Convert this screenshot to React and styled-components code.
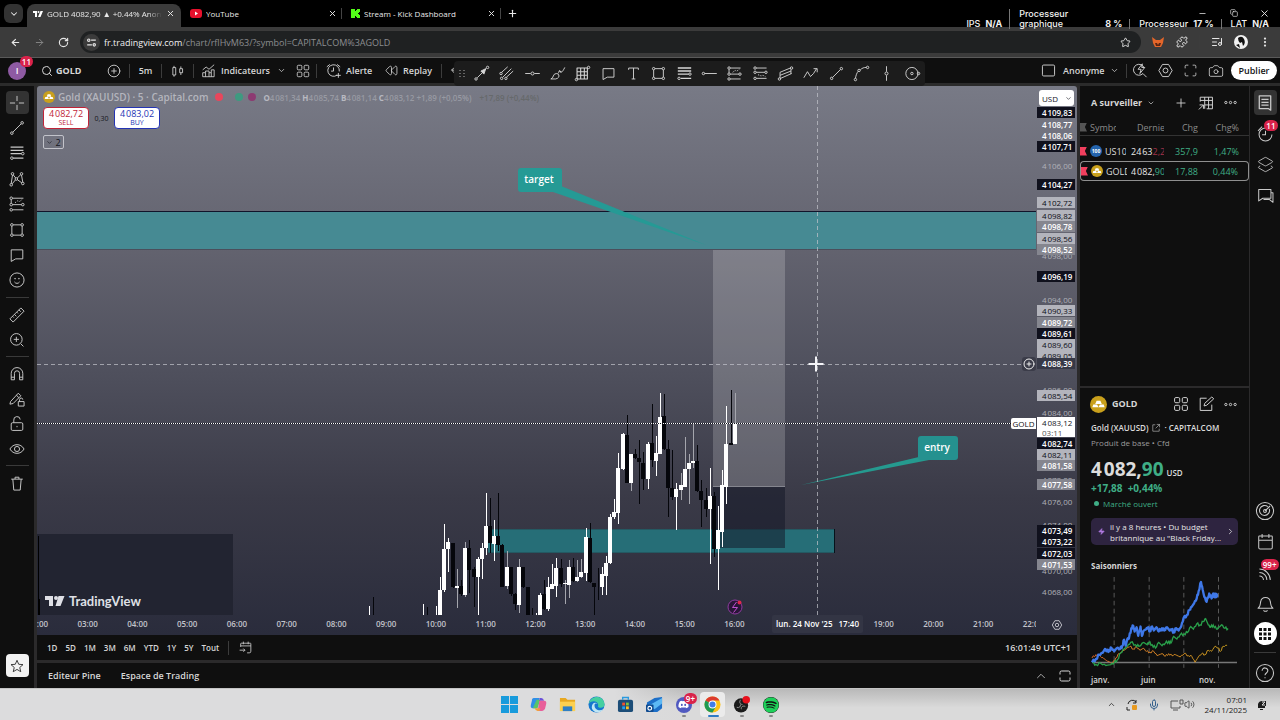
import React from "react";
import styled, { createGlobalStyle, css } from "styled-components";
import {
  ArrowLeft, ArrowRight, RotateCw, Star, Puzzle, ListMusic, EllipsisVertical, ChevronDown, ChevronUp,
  ChevronRight, X, Plus, Minus, Copy, Search, CirclePlus, Camera, Layers2, Mic, Volume2, Zap, Rewind,
} from "lucide-react";
import { FaDiscord, FaSpotify } from "react-icons/fa";

const Global = createGlobalStyle`
  *, *::before, *::after { box-sizing: border-box; }
  html { background: #0f0f0f; }
  body { margin: 0; font-family: "Open Sans", "Noto Sans", sans-serif; font-size: 9px; color: #d6d6d6; }
  button, select { font: inherit; color: inherit; background: none; border: 0; padding: 0; margin: 0; }
  ul { list-style: none; margin: 0; padding: 0; }
  h2, h3, p { margin: 0; font-size: inherit; font-weight: inherit; }
  svg { display: block; flex: none; }
`;

/* ---------- icon set, drawn on a 28 unit grid ---------- */
const dot = (x, y, r = 2) => <circle key={`${x}-${y}`} cx={x} cy={y} r={r} />;
const GLYPHS = {
  cross: <path d="M14 3v8M14 17v8M3 14h8M17 14h8" />,
  trend: <>{dot(6, 22)}{dot(22, 6)}<path d="M7.5 20.5l13-13" /></>,
  fib: <><path d="M4 5h20M4 10h20M4 15h17M8 22h16" strokeWidth="2" />{dot(23, 15)}{dot(6, 22)}</>,
  fibBold: <><path d="M3 5h22M3 10h22M3 15h18M8 22h17" strokeWidth="2.4" />{dot(23, 15)}{dot(5, 22)}</>,
  pattern: <>{dot(7, 6)}{dot(21, 6)}{dot(13, 14)}{dot(5, 23)}{dot(23, 21)}<path d="M7 8L5 21M8 7.500l4 5M14.500 12.500l5-5M21 8l2 11M6.500 21.500l5-6M14.500 15l7 5" /></>,
  position: <>{dot(5, 5)}{dot(5, 15)}{dot(5, 23)}{dot(23, 15)}<path d="M7 5h17M7 15h14M7 23h17M5 7v6" /><path d="M11 12l4-3 3 1 4-3" strokeDasharray="2 2" /></>,
  positionB: <>{dot(5, 5)}{dot(5, 12)}{dot(5, 22)}{dot(23, 12)}<path d="M7 5h17M7 12h14M7 22h17" /><path d="M10 16l5 2 3-1 4 2" strokeDasharray="2 2" /></>,
  rect: <>{dot(6, 6)}{dot(22, 6)}{dot(6, 22)}{dot(22, 22)}<path d="M8 6h12M8 22h12M6 8v12M22 8v12" /></>,
  callout: <path d="M5 6h18v14H12l-7 4z" />,
  smile: <><circle cx="14" cy="14" r="11" /><path d="M10 17c2 3 6 3 8 0" />{dot(11, 12, 0.6)}{dot(17, 12, 0.6)}</>,
  ruler: <path d="M3 20L20 3l5 5L8 25zM7 16l2 2M10 13l3 3M13.500 9.500l2 2M17 6l3 3" />,
  zoom: <><circle cx="13" cy="13" r="9" /><path d="M13 9v8M9 13h8M20 20l4 4" /></>,
  magnet: <path d="M5 23V13a9 9 0 0118 0v10h-5V13a4 4 0 00-8 0v10zM5 19h5M18 19h5" />,
  pencilLock: <><path d="M4 18L16 5l4 4L8 21l-5 1zM13 8l4 4" /><path d="M16 18h9v7h-9zM18 18v-3a2.500 2.500 0 015 0" /></>,
  lock: <><rect x="5" y="12" width="18" height="12" rx="2" /><path d="M9 12V8a5 5 0 0110-1M14 17v2" /></>,
  eye: <><path d="M3 14c5-9 17-9 22 0-5 9-17 9-22 0z" /><circle cx="14" cy="14" r="4" /></>,
  trash: <path d="M5 8h18M11 8V5h6v3M7.500 8l1.500 17h10l1.500-17" />,
  star: <path d="M14 4l3 7 7.500.6-5.700 5 1.800 7.400-6.600-4-6.600 4 1.800-7.400-5.700-5L11 11z" />,
  candles: <path d="M7 5v3M7 21v3M5 8h5v13H5zM19 6v4M19 17v4M17 10h5v7h-5z" />,
  indicators: <path d="M3 12l6-5 5 4 9-8M3 24V17h5v-3h6v3h4v-5h5v12zM8 17v7M14 17v7M18 17v7" />,
  tiles: <><rect x="4" y="4" width="8" height="8" rx="2" /><rect x="16" y="4" width="8" height="8" rx="2" /><rect x="4" y="16" width="8" height="8" rx="2" /><rect x="16" y="16" width="8" height="8" rx="2" /></>,
  alert: <path d="M20 21.500a9.500 9.500 0 113.500-6M14 9v6h-4M3 8l5-4M20 4l5 4M22 18v8M18 22h8" />,
  alarm: <path d="M14 6a9.500 9.500 0 109.500 9.500M14 10v6H9M3 10l6-6" />,
  square: <rect x="4" y="5" width="20" height="18" rx="2" />,
  bolt: <path d="M20 10a9 9 0 10-2 9l6 6M17 3l-7 9h5l-2 7 8-10h-5z" />,
  hex: <><path d="M9 4h10l6 10-6 10H9L3 14z" /><circle cx="14" cy="14" r="4" /></>,
  full: <path d="M4 10V6q0-2 2-2h4M18 4h4q2 0 2 2v4M24 18v4q0 2-2 2h-4M10 24H6q-2 0-2-2v-4" />,
  window: <path d="M4 11V7q0-3 3-3h14q3 0 3 3v4M24 17v4q0 3-3 3H7q-3 0-3-3v-4" />,
  arrowLine: <>{dot(5, 23)}{dot(24, 4)}<path d="M7 21L22 6" /><path d="M21 6l-8 4 5 5z" fill="currentColor" /></>,
  pitch: <>{dot(5, 14)}{dot(13, 22)}{dot(6, 22)}<path d="M6 12L16 3M14 20l11-10M8 20L22 6" /></>,
  hline: <><path d="M2 14h9M17 14h9" />{dot(14, 14, 2.500)}</>,
  brush: <path d="M3 23c5-1 3-9 9-9 6 0 6 8-1 9zM15 14c2-4 3-5 5-2M16 11c1-3 3-2 3 1 3 0 5-4 7-8" />,
  gann: <><path d="M5 5h17v18H5zM11 5v18M17 5v18M5 11h17M5 17h17" strokeWidth="1.8" />{dot(24, 4)}{dot(4, 24)}</>,
  text: <path d="M6 8V5h16v3M14 5v18M11 23h6" />,
  ray: <>{dot(4, 14)}<path d="M6 14h20" /></>,
  channel: <>{dot(24, 5)}{dot(4, 23)}<path d="M5 12L22 5M5 17l18-7M6 22l18-8M5 12v10M23 7v8" /></>,
  wave: <path d="M3 21l6-10 5 8 5-5 5-8M19 6h6v6" />,
  curve: <>{dot(4, 24)}{dot(24, 4)}{dot(10, 9)}<path d="M4 22c1-5 2-9 5-12M12 8c3-3 6-4 10-4" /></>,
  vline: <><path d="M14 2v9M14 17v9" />{dot(14, 14, 2.500)}</>,
  circle: <><circle cx="13" cy="14" r="10" />{dot(13, 14)}{dot(24, 14)}</>,
  list: <path d="M6 4h16v20l-3-2H6zM9 9h10M9 13h10M9 17h10" strokeWidth="1.800" />,
  chat: <path d="M4 5h18v13H10l-6 4zM22 10h3v14l-5-4H11" />,
  target: <><circle cx="14" cy="14" r="12" /><path d="M18 8a7 7 0 102 3M14 14l7-7" />{dot(14, 14, 2)}</>,
  calendar: <path d="M4 7q0-1 1-1h18q1 0 1 1v16q0 2-2 2H6q-2 0-2-2zM4 12h20M9 3v6M19 3v6" />,
  goto: <path d="M5 13V7q0-1 1-1h17q1 0 1 1v14q0 3-3 3h-4M5 11h19M10 3v5M19 3v5M3 19h10M10 16l3 3-3 3" />,
  feed: <path d="M5 9a16 16 0 0116 16M5 14a11 11 0 0111 11M5 19a6 6 0 016 6" />,
  bell: <path d="M3 21c4-2 3-7 4-10 1-8 13-8 14 0 1 3 0 8 4 10zM11 24q3 3 6 0" />,
  help: <><circle cx="14" cy="14" r="12" /><path d="M10 11c0-6 8-5 8 0 0 3-4 3-4 6M14 20v1.500" /></>,
  table: <path d="M5 12V5h19v18h-9M5 10h19M12 5v18M18 5v18M12 17h12M3 24l7-7M4 17h6v6" />,
  more: <>{dot(4, 14, 2.500)}{dot(14, 14, 2.500)}{dot(24, 14, 2.500)}</>,
  edit: <path d="M15 5H5v19h18v-9M11 17l1-4L23 3l3 3-11 10z" />,
  out: <path d="M12 5H5v18h18v-7M16 4h8v8M24 4L13 15" />,
  undo: <path d="M12 6l-6 6 6 6M6 12h14" />,
  tune: <>{dot(7, 8, 3)}{dot(21, 20, 3)}<path d="M13 8h12M3 20h12" /></>,
};
const Glyph = ({ name, size = 18, weight = 1.5 }) => (
  <svg width={size} height={size} viewBox="0 0 28 28" fill="none" stroke="currentColor" strokeWidth={weight} strokeLinejoin="round" aria-hidden="true">
    {GLYPHS[name]}
  </svg>
);

const Coin = ({ size }) => (
  <svg width={size} height={size} viewBox="0 0 18 18" aria-hidden="true">
    <circle cx="9" cy="9" r="9" fill="#c9a01c" />
    <path d="M7 5h4l1.500 3.500h-7zM3.500 9h4L9 12H2.500zM10.500 9h4l1 3H9z" fill="#fff" />
  </svg>
);

/* ---------- page frame ---------- */
const Page = styled.div`
  min-height: 100vh;
  display: flex;
  flex-direction: column;
  position: relative;
`;

/* ---------- browser chrome ---------- */
const TabStrip = styled.header`
  height: 27px;
  background: #000;
  display: flex;
  align-items: stretch;
  padding: 4px 0 0 4px;
  color: #e8e8e8;
  font-size: 8px;
  font-weight: 500;
`;
const RoundButton = styled.button`
  width: 19px;
  height: 19px;
  margin-right: 4px;
  border-radius: 6px;
  background: #333;
  display: grid;
  place-items: center;
`;
const Tab = styled.div`
  flex: 0 1 ${(p) => p.$w}px;
  min-width: 0;
  display: flex;
  align-items: center;
  gap: 4px;
  padding: 0 6px 4px 6px;
  ${(p) => p.$active
    ? css`background: #3b3b3b; border-radius: 8px 8px 0 0;`
    : css`padding: 0 8px 4px 9px; &::after { content: ""; width: 1px; height: 11px; background: #444; margin-right: -8px; }`}
`;
const TabTitle = styled.span`
  flex: 1;
  min-width: 0;
  overflow: hidden;
  white-space: nowrap;
  ${(p) => p.$fade && css`mask-image: linear-gradient(90deg, #000 88%, transparent);`}
`;
const PlainButton = styled.button`
  display: grid;
  place-items: center;
  width: ${(p) => p.$w || 16}px;
  height: ${(p) => p.$h || 18}px;
  color: ${(p) => p.$color || "inherit"};
`;
const WindowButtons = styled.div`
  margin-left: auto;
  display: flex;
  width: 93px;
  justify-content: space-around;
`;
const AddressRow = styled.div`
  height: 31px;
  background: #3b3b3b;
  border-bottom: 1px solid #5a5a5a;
  display: flex;
  align-items: center;
  padding: 0 3px;
  color: #e6e6e6;
`;
const AddressField = styled.div`
  flex: 1;
  height: 22px;
  margin: 0 5px;
  border-radius: 11px;
  background: #1f2122;
  display: flex;
  align-items: center;
  padding: 0 8px 0 3px;
  gap: 4px;
`;
const SiteInfo = styled.button`
  width: 17px;
  height: 17px;
  border-radius: 50%;
  background: #3b3b3b;
  display: grid;
  place-items: center;
`;
const Url = styled.span`
  flex: 1;
  color: #8c8e90;
  font-size: 9px;
  b { color: #f0f0f0; font-weight: 500; }
`;
const ToolSet = styled.div`
  display: flex;
  align-items: center;
`;
const Stats = styled.dl`
  position: absolute;
  right: 11px;
  top: 9px;
  margin: 0;
  display: flex;
  align-items: flex-end;
  font: 9px/10px Inter, sans-serif;
  color: #f2f2f2;
  pointer-events: none;
`;
const Stat = styled.div`
  display: flex;
  align-items: flex-end;
  justify-content: space-between;
  gap: 5px;
  padding: 0 7px 0 9px;
  width: ${(p) => (p.$wide ? "120px" : "auto")};
  & + & { border-left: 1px solid #777; }
  &:last-child { padding-right: 0; }
  dt { font-weight: 500; }
  dd { margin: 0; font-weight: 700; white-space: nowrap; }
`;

/* ---------- application header ---------- */
const AppHeader = styled.div`
  position: relative;
  height: 28px;
  background: #0f0f0f;
  border-bottom: 3px solid #2b2b2b;
  display: flex;
  align-items: center;
  padding-right: 3px;
  font-weight: 600;
`;
const Tool = styled.button`
  width: ${(p) => p.$w}px;
  height: 24px;
  display: flex;
  align-items: center;
  justify-content: ${(p) => (p.$pad ? "flex-start" : "center")};
  padding-left: ${(p) => p.$pad || 0}px;
  gap: ${(p) => p.$gap || 4}px;
  white-space: nowrap;
  font-weight: ${(p) => (p.$bold ? 700 : 600)};
`;
const Divider = styled.span`
  width: 1px;
  height: 14px;
  margin: 0 ${(p) => p.$m || 1}px;
  background: #3c3c3c;
`;
const Profile = styled.button`
  position: relative;
  width: 18px;
  height: 18px;
  margin: 0 11px 0 8px;
  border-radius: 50%;
  background: #8e5aa3;
  color: #fff;
  font-size: 9px;
`;
const Badge = styled.span`
  position: absolute;
  top: ${(p) => p.$top || -6}px;
  right: ${(p) => p.$right || -7}px;
  min-width: 12px;
  height: 11px;
  padding: 0 2px;
  border-radius: 6px;
  background: #d9234a;
  color: #fff;
  font-size: 8px;
  line-height: 11px;
  font-weight: 600;
  text-align: center;
`;
const FloatingTools = styled.div`
  position: absolute;
  left: 454px;
  top: 3px;
  width: 471px;
  height: 25px;
  border-radius: 4px;
  background: #1c1c1c;
  display: flex;
  align-items: center;
  z-index: 2;
  button { flex: 1; height: 24px; display: grid; place-items: center; }
`;
const Grip = styled.span`
  width: 7px;
  height: 9px;
  margin: 0 4px;
  background: radial-gradient(circle, #666 1px, transparent 1px) 0 0 / 4px 3px;
`;
const Publish = styled.button`
  height: 19px;
  width: 46px;
  margin-left: 3px;
  border-radius: 10px;
  background: #fff;
  color: #151515;
  font-weight: 600;
`;
const RightTools = styled(ToolSet)`
  margin-left: auto;
`;

/* ---------- workspace ---------- */
const Workspace = styled.main`
  flex: 1;
  display: flex;
  background: #2b2a2b;
  gap: 3px;
`;
const LeftRail = styled.nav`
  width: 34px;
  background: #0f0f0f;
  display: flex;
  flex-direction: column;
  align-items: center;
  padding: 5px 0 11px;
  color: #c9c9c9;
`;
const RailGroup = styled.div`
  display: flex;
  flex-direction: column;
  gap: 2px;
  & + & {
    margin-top: 5px;
    padding-top: 5px;
    border-top: 1px solid #3a3a3a;
  }
  &:first-child {
    height: 201px;
    gap: 0;
    justify-content: space-between;
  }
`;
const RailButton = styled.button`
  position: relative;
  width: 23px;
  height: ${(p) => p.$h || 23}px;
  border-radius: 4px;
  display: grid;
  place-items: center;
  background: ${(p) => (p.$on ? "#333" : "none")};
`;
const Favourite = styled(RailButton)`
  margin-top: auto;
  background: #f2f2f2;
  color: #222;
`;
const Center = styled.section`
  flex: 1;
  min-width: 0;
  display: flex;
  flex-direction: column;
`;
const ChartBox = styled.div`
  flex: 1;
  min-height: 549px;
  display: grid;
  grid-template: minmax(0, 1fr) 20px / minmax(0, 1fr) 41px;
  background: linear-gradient(#787a86, #646470 28%, #4f505d 52%, #3a3a47 75%, #2a2c3c);
  border-radius: 3px 3px 0 0;
`;
const Plot = styled.div`
  position: relative;
  min-width: 0;
  overflow: hidden;
`;
const Canvas = styled.svg`
  position: absolute;
  inset: 0;
  width: 100%;
  height: 100%;
`;
const Legend = styled.div`
  position: relative;
  padding: 4px 6px;
`;
const LegendLine = styled.div`
  display: flex;
  align-items: center;
  height: 14px;
  gap: 3px;
  white-space: nowrap;
`;
const SymbolName = styled.h2`
  font-size: 10px;
  font-weight: 600;
  color: #b4b5bd;
  margin-right: 2px;
`;
const Status = styled.span`
  width: 8px;
  height: 8px;
  margin-left: ${(p) => p.$gap || 2}px;
  border-radius: 50%;
  background: ${(p) => p.$color};
`;
const Ohlc = styled.span`
  margin-left: 4px;
  font-size: 8px;
  font-weight: 600;
  color: #989aa3;
  b { color: #b8b9c1; font-weight: 700; }
  i { font-style: normal; color: #66696b; margin-left: 6px; }
`;
const Quotes = styled.div`
  display: flex;
  align-items: center;
  margin: 3px 0 6px;
  font-size: 8px;
  color: #16161e;
`;
const Quote = styled.button`
  width: 46px;
  height: 22px;
  border: 1px solid ${(p) => p.$color};
  border-radius: 4px;
  background: #fff;
  color: ${(p) => p.$color};
  font-size: 9px;
  line-height: 10px;
  small { display: block; font-size: 7px; line-height: 8px; }
`;
const Spread = styled.span`
  width: 25px;
  font-size: 7px;
  text-align: center;
`;
const Collapse = styled.button`
  width: 21px;
  height: 14px;
  border: 1px solid #c2c3ca;
  border-radius: 2px;
  display: flex;
  align-items: center;
  justify-content: center;
  gap: 2px;
  color: #14151e;
`;
const LineTag = styled.span`
  position: absolute;
  right: 0;
  top: 332px;
  width: 25px;
  height: 11px;
  border-radius: 2px 0 0 2px;
  background: #fff;
  color: #111;
  font-size: 8px;
  line-height: 11px;
  text-align: center;
`;
const AddAlert = styled.button`
  position: absolute;
  right: 0;
  top: 271px;
  width: 14px;
  height: 14px;
  border-radius: 3px;
  background: #3b3c49;
  color: #eee;
  display: grid;
  place-items: center;
`;
const PriceAxis = styled.div`
  position: relative;
  overflow: hidden;
`;
const Currency = styled.label`
  position: absolute;
  z-index: 3;
  top: 4px;
  left: 3px;
  width: 35px;
  height: 16px;
  border-radius: 3px;
  background: #fff;
  color: #14151e;
  display: flex;
  align-items: center;
  select { appearance: none; width: 100%; height: 16px; padding-left: 3px; font-size: 8px; outline: 0; }
  svg { position: absolute; right: 2px; pointer-events: none; }
`;
const TAG = {
  dark: css`background: #10111d; color: #fff; font-weight: 600; z-index: 1;`,
  light: css`background: #b3b4bc; color: #0c0d16; z-index: 1;`,
  grey: css`background: #85868f; color: #fff; font-weight: 600; z-index: 1;`,
  clear: css`color: #fff; font-weight: 600;`,
  cross: css`background: #373947; color: #fff; font-weight: 600; z-index: 2;`,
  last: css`background: #fff; color: #14151e; z-index: 2;`,
  dim: css`color: #b0b1b9;`,
};
const PriceTag = styled.li`
  position: absolute;
  left: 1px;
  top: ${(p) => p.$y}px;
  width: 38px;
  padding-left: 5px;
  font-size: 8px;
  line-height: 11px;
  white-space: nowrap;
  ${(p) => TAG[p.$kind]}
  small { display: block; font-size: 8px; line-height: 9px; color: #555; }
`;
const TimeAxis = styled.div`
  position: relative;
  overflow: hidden;
`;
const Hours = styled.ul`
  display: grid;
  grid-template-columns: repeat(21, 1fr);
  width: 104.58%;
  margin-left: -2.4%;
  font-size: 8px;
  line-height: 18px;
  font-weight: 600;
  color: #c3c4cb;
  text-align: center;
`;
const TimeTag = styled.span`
  position: absolute;
  left: 735px;
  top: 0;
  width: 91px;
  height: 18px;
  background: #333544;
  border-radius: 2px;
  color: #fff;
  font-size: 8px;
  line-height: 18px;
  font-weight: 600;
  display: flex;
  justify-content: center;
  gap: 6px;
  white-space: nowrap;
`;
const AxisSettings = styled.button`
  display: grid;
  place-items: center;
  color: #d2d3d8;
`;
const RangeBar = styled.div`
  height: 25px;
  background: #0f0f0f;
  display: flex;
  align-items: center;
  padding: 0 6px 0 10px;
  font-size: 9px;
  font-weight: 600;
  gap: 8px;
`;
const Range = styled.button`
  font-size: 8px;
`;
const PanelBar = styled(RangeBar)`
  margin-top: 3px;
  gap: 20px;
  padding: 0 5px 0 11px;
`;
const Push = styled.div`
  margin-left: auto;
  display: flex;
  align-items: center;
  gap: 10px;
`;
const Side = styled.aside`
  width: 169px;
  display: flex;
  flex-direction: column;
  gap: 2px;
`;
const Watch = styled.section`
  height: 300px;
  background: #0f0f0f;
`;
const PanelHead = styled.div`
  height: ${(p) => p.$h || 33}px;
  display: flex;
  align-items: center;
  padding: 0 6px 0 ${(p) => p.$pad || 11}px;
  font-weight: 700;
  button { font-weight: 700; }
`;
const HeadTitle = styled.button`
  display: flex;
  align-items: center;
  gap: 5px;
  margin-right: auto;
`;
const WatchTable = styled.table`
  width: 100%;
  table-layout: fixed;
  border-collapse: separate;
  border-spacing: 0;
  font-size: 9px;
  th, td { padding: 0; text-align: right; font-weight: 400; white-space: nowrap; overflow: hidden; }
  th { height: 17px; color: #8a8a8a; border-bottom: 1px solid #333; }
  td { height: 20px; color: #3fae86; }
  th:first-child, td:first-child { text-align: left; }
  th:last-child, td:last-child { padding-right: 10px; }
`;
const WatchRow = styled.tr`
  ${(p) => p.$on && css`
    td { border: solid #8f8f8f; border-width: 1px 0; }
    td:first-child { border-left-width: 1px; border-radius: 4px 0 0 4px; }
    td:last-child { border-right-width: 1px; border-radius: 0 4px 4px 0; }
  `}
`;
const SymbolCell = styled.div`
  display: flex;
  align-items: center;
  gap: 3px;
  width: 46px;
  overflow: hidden;
  color: #dcdcdc;
`;
const Flag = styled.span`
  flex: none;
  width: 7px;
  height: 9px;
  background: ${(p) => p.$color};
  clip-path: polygon(0 0, 100% 0, 70% 50%, 100% 100%, 0 100%);
`;
const IndexLogo = styled.span`
  flex: none;
  width: 12px;
  height: 12px;
  border-radius: 50%;
  background: #2464ad;
  color: #fff;
  font-size: 5px;
  line-height: 12px;
  font-weight: 700;
  text-align: center;
`;
const Last = styled.div`
  width: 34px;
  margin-left: 4px;
  overflow: hidden;
  text-align: left;
  color: #e8e8e8;
  span { color: ${(p) => (p.$up ? "#3fae86" : "#a3324a")}; }
`;
const HeadLabel = styled.span`
  width: 26px;
  overflow: hidden;
  color: #8a8a8a;
`;
const HeadClip = styled.div`
  width: 27px;
  margin-left: 10px;
  overflow: hidden;
  text-align: left;
`;
const Gap = styled.td`
  && { height: 5px; }
`;
const Details = styled.section`
  flex: 1;
  background: #0f0f0f;
  line-height: 14px;
`;
const DetailBody = styled.div`
  padding: 0 11px;
`;
const Line = styled.p`
  display: flex;
  align-items: center;
  gap: 3px;
  height: 15px;
  font-size: 8px;
  white-space: nowrap;
  color: ${(p) => p.$color || "#dcdcdc"};
  font-weight: ${(p) => (p.$bold ? 600 : 400)};
`;
const Bullet = styled.span`
  width: 5px;
  height: 5px;
  margin: 0 1px 0 3px;
  border-radius: 50%;
  background: currentColor;
`;
const BigPrice = styled.p`
  display: flex;
  align-items: baseline;
  height: 22px;
  margin-top: 8px;
  font-size: 19px;
  line-height: 22px;
  font-weight: 700;
  color: #dcdcdc;
  white-space: nowrap;
  span { color: #3fae86; }
  small { font-size: 8px; line-height: 8px; font-weight: 600; margin-left: 3px; }
`;
const Change = styled.p`
  font-size: 10px;
  line-height: 16px;
  font-weight: 700;
  color: #3fae86;
`;
const News = styled.button`
  width: 100%;
  height: 27px;
  margin: 7px 0 14px;
  border-radius: 5px;
  background: #2e2440;
  display: flex;
  align-items: center;
  gap: 5px;
  padding: 0 5px 0 7px;
  text-align: left;
  font-size: 8px;
  line-height: 11px;
  font-weight: 400;
  color: #e6e6e6;
  span { flex: 1; white-space: nowrap; }
`;
const Caption = styled.h3`
  font-size: 8px;
  line-height: 14px;
  font-weight: 700;
`;
const Season = styled.svg`
  width: 100%;
  height: auto;
  margin-top: 4px;
`;
const Months = styled.div`
  display: grid;
  grid-template-columns: 50px 58px 1fr;
  margin-top: 7px;
  font-size: 8px;
  line-height: 10px;
  font-weight: 600;
`;
const RightRail = styled(LeftRail)`
  width: 30px;
  margin-left: -2px;
  padding: 4px 0 3px;
  gap: 6px;
  & > span { width: 22px; height: 1px; margin: 1px 0; background: #3a3a3a; }
`;
const Spacer = styled.div`
  flex: 1;
`;
const Apps = styled(RailButton)`
  border-radius: 50%;
  background: #fff;
`;

/* ---------- desktop taskbar ---------- */
const Taskbar = styled.footer`
  height: 32px;
  display: grid;
  grid-template-columns: 1fr auto 1fr;
  align-items: center;
  border-top: 1px solid #c4c4c4;
  background:
    linear-gradient(90deg, #dcdcdd 48%, transparent 54%),
    linear-gradient(#b9b9b9, #dadada 60%);
  color: #222;
`;
const Launcher = styled.button`
  position: relative;
  width: 25px;
  height: 25px;
  border-radius: 4px;
  display: grid;
  place-items: center;
  background: ${(p) => (p.$on ? "#ebebeb" : "none")};
  ${(p) => p.$run && css`
    &::after {
      content: "";
      position: absolute;
      bottom: 0;
      left: 50%;
      width: ${p.$on ? 11 : 4}px;
      height: 2px;
      margin-left: ${p.$on ? -5 : -2}px;
      border-radius: 1px;
      background: ${p.$on ? "#2f7bc4" : "#888"};
    }
  `}
`;
const Dock = styled.div`
  display: flex;
  gap: 4px;
`;
const Disc = styled.span`
  width: 16px;
  height: 16px;
  border-radius: 50%;
  background: #5059c0;
  display: grid;
  place-items: center;
`;
const SpotifyDisc = styled(FaSpotify)`
  border-radius: 50%;
  background: #111;
  color: #1ed05a;
`;
const Tray = styled.div`
  display: flex;
  align-items: center;
  justify-content: flex-end;
  gap: 10px;
  padding-right: 13px;
`;
const Clock = styled.time`
  font-size: 8px;
  line-height: 10px;
  text-align: right;
`;

/* ---------- data ---------- */
const t = (s) => s.replace(/^4/, "4\u200A");
const PRICES = [
  ["4109,83", 113, "dark"], ["4108,77", 125, "clear"], ["4108,06", 136, "clear"], ["4107,71", 147, "dark"],
  ["4106,00", 166, "dim"], ["4104,27", 185, "dark"], ["4102,72", 203, "light"], ["4098,82", 216, "light"],
  ["4098,78", 227, "grey"], ["4098,56", 239, "light"], ["4098,52", 250, "grey"], ["4098,00", 256, "dim"],
  ["4096,19", 277, "dark"], ["4094,00", 300, "dim"], ["4090,33", 311, "light"], ["4089,72", 323, "grey"],
  ["4089,61", 334, "dark"], ["4089,60", 345, "light"], ["4089,05", 356, "light"], ["4088,39", 364, "cross"],
  ["4086,00", 390, "dim"], ["4085,54", 396, "light"], ["4084,00", 413, "dim"], ["4083,12", 423, "last"],
  ["4082,74", 444, "dark"], ["4082,11", 455, "light"], ["4081,58", 466, "grey"], ["4078,00", 480, "dim"],
  ["4077,58", 485, "grey"], ["4076,00", 502, "dim"], ["4074,00", 525, "dim"], ["4073,49", 531, "dark"],
  ["4073,22", 542, "dark"], ["4072,03", 554, "dark"], ["4071,53", 565, "grey"], ["4070,00", 571, "dim"],
  ["4068,00", 592, "dim"],
];
// 17:00 and 18:00 give way to the crosshair's own time label
const HOURS = Array.from({ length: 21 }, (_, i) => (i === 15 || i === 16 ? "" : `${String(i + 2).padStart(2, "0")}:00`));

// x, high, low, body top, body bottom, kind (w rising, b falling, g rising with grey wick), in thirds of a pixel
const CANDLES = [
  [28, 678, 706, 0, 0, "w"], [40, 650, 706, 0, 0, "b"], [190, 672, 706, 0, 0, "w"], [202, 680, 706, 0, 0, "b"],
  [229, 678, 706, 0, 0, "w"], [241, 590, 706, 630, 706, "w"], [253, 432, 637, 507, 630, "w"], [265, 473, 575, 485, 508, "w"],
  [278, 488, 625, 488, 622, "b"], [291, 567, 683, 618, 624, "g"], [303, 600, 648, 617, 643, "b"], [315, 487, 650, 503, 645, "g"],
  [328, 480, 640, 503, 570, "b"], [341, 560, 680, 568, 592, "b"], [353, 530, 706, 537, 592, "w"], [365, 490, 597, 503, 538, "w"],
  [377, 338, 525, 438, 503, "w"], [391, 355, 520, 438, 490, "b"], [403, 420, 543, 467, 492, "w"], [415, 340, 512, 467, 495, "b"],
  [427, 492, 622, 495, 620, "b"], [441, 513, 628, 562, 618, "g"], [453, 562, 648, 562, 643, "b"], [465, 640, 690, 643, 672, "b"],
  [477, 537, 698, 562, 675, "g"], [490, 562, 625, 562, 620, "b"], [503, 620, 706, 620, 706, "b"], [515, 685, 706, 0, 0, "b"],
  [527, 700, 706, 0, 0, "w"], [540, 638, 706, 645, 706, "w"], [552, 600, 690, 643, 687, "b"], [565, 590, 693, 622, 688, "w"],
  [577, 553, 628, 613, 627, "w"], [589, 533, 650, 563, 618, "w"], [602, 537, 620, 563, 612, "b"], [615, 600, 672, 608, 613, "g"],
  [627, 540, 655, 560, 614, "g"], [639, 535, 605, 560, 603, "b"], [651, 540, 605, 592, 603, "g"], [663, 537, 595, 577, 592, "g"],
  [678, 445, 603, 470, 578, "w"], [689, 430, 608, 473, 605, "b"], [701, 608, 706, 610, 622, "b"], [713, 565, 660, 0, 0, "b"],
  [727, 560, 645, 583, 622, "w"], [739, 527, 645, 548, 588, "w"], [751, 402, 553, 410, 550, "w"], [763, 357, 417, 396, 410, "w"],
  [775, 218, 432, 263, 398, "w"], [788, 160, 270, 163, 267, "w"], [801, 105, 310, 165, 308, "b"], [813, 222, 333, 223, 308, "g"],
  [826, 207, 237, 222, 235, "b"], [838, 180, 372, 235, 247, "b"], [850, 215, 330, 248, 297, "b"], [863, 185, 328, 192, 297, "w"],
  [875, 72, 260, 190, 240, "b"], [887, 167, 287, 218, 243, "w"], [900, 38, 223, 110, 222, "w"], [912, 42, 210, 108, 206, "b"],
  [925, 180, 410, 206, 325, "b"], [937, 210, 360, 325, 352, "b"], [949, 310, 450, 326, 352, "w"], [963, 278, 360, 314, 330, "g"],
  [975, 170, 322, 267, 321, "g"], [987, 222, 372, 248, 267, "g"], [999, 132, 265, 242, 248, "g"], [1012, 195, 335, 243, 332, "b"],
  [1024, 300, 440, 332, 360, "b"], [1037, 325, 412, 360, 388, "b"], [1049, 265, 552, 348, 388, "w"], [1061, 335, 532, 348, 507, "b"],
  [1075, 377, 630, 450, 507, "w"], [1087, 270, 500, 315, 457, "w"], [1099, 78, 372, 192, 320, "w"], [1112, 30, 195, 190, 194, "b"],
  [1125, 40, 193, 130, 192, "g"],
];

const BLUE = [333,848,345,838,355,825,365,820,372,808,378,815,385,812,392,805,400,815,408,805,418,808,425,798,430,780,435,798,440,778,445,775,452,745,458,738,462,755,468,742,473,768,480,740,484,768,490,752,497,748,503,742,508,755,515,740,520,752,528,742,535,755,545,745,552,752,560,742,568,752,575,748,580,758,588,745,595,752,603,740,610,715,620,705,628,690,635,680,642,670,650,655,656,632,663,605,668,628,673,650,680,665,688,640,695,655,700,640,708,645];
const GREEN = [333,848,345,855,360,852,375,858,390,855,400,850,410,840,420,820,430,808,440,800,450,788,465,795,475,800,490,788,500,795,505,788,515,795,525,805,535,788,545,798,555,790,565,785,572,790,580,770,590,778,600,765,612,762,622,758,632,740,640,748,650,732,660,735,670,725,677,716,685,735,692,742,700,735,710,748,718,742,725,735,735,745,745,746];
const ORANGE = [333,835,345,825,358,830,370,838,380,845,395,852,405,835,415,822,430,812,440,805,448,800,458,808,468,802,478,812,488,806,498,815,508,818,520,815,530,828,545,822,555,830,565,822,575,828,585,825,600,832,612,822,625,828,635,830,645,848,655,832,665,822,675,825,685,812,695,815,705,800,715,805,722,815,730,800,742,797];

// Adds a small zigzag between the given points
const zigzag = (flat, amp) => {
  const out = [];
  for (let i = 0; i < flat.length; i += 2) {
    const [x, y, nx, ny] = flat.slice(i, i + 4);
    out.push(`${x},${y}`);
    if (nx !== undefined) {
      const k = (i * 7) % 5 - 2;
      out.push(`${(x * 2 + nx) / 3},${(y * 2 + ny) / 3 + k * amp}`, `${(x + nx * 2) / 3},${(y + ny * 2) / 3 - k * amp}`);
    }
  }
  return out.join(" ");
};

const FLOATING = ["arrowLine", "pitch", "hline", "brush", "gann", "callout", "text", "rect", "fibBold", "ray", "position", "positionB", "channel", "wave", "trend", "curve", "vline", "circle"];
const LEFT = [["cross", "trend", "fib", "pattern", "position", "rect", "callout", "smile"], ["ruler", "zoom"], ["magnet", "pencilLock", "lock", "eye"], ["trash"]];

/* ---------- parts ---------- */
const Candle = ({ d: [x, h, l, a, b, k] }) => {
  const cx = Math.round(360 + x / 3);
  const y = (v) => Math.round(380 + v / 3);
  const fill = k === "b" ? "#05060b" : "#fff";
  return (
    <g>
      <rect x={cx} y={y(h)} width="1" height={y(l) - y(h)} fill={k === "g" ? "#a5a6ad" : fill} />
      {b > 0 && <rect x={cx - 2} y={y(a)} width="4" height={Math.max(1, y(b) - y(a))} fill={fill} />}
    </g>
  );
};

const Drawing = () => (
  <Canvas viewBox="37 86 999 529" preserveAspectRatio="xMinYMin slice" role="img" aria-label="Gold, 5 minutes">
    <rect x="37" y="534" width="196" height="81" fill="#222431" />
    <path d="M38.500 536v63" stroke="#000" />
    <path d="M39 599v16" stroke="#000" strokeWidth="2" />
    <rect x="37" y="211" width="999" height="38" fill="#468a93" />
    <path d="M37 211.500h999" stroke="#11132a" />
    <path d="M37 249.500h999" stroke="#4b4f5c" />
    <rect x="488" y="529" width="346" height="24" fill="#266e77" />
    <path d="M488 529.500h346M488 552.500h346" stroke="#245962" />
    <path d="M834.500 529v24" stroke="#06121b" />
    <rect x="713" y="250" width="72" height="236" fill="#fff" fillOpacity=".19" />
    <rect x="713" y="486" width="72" height="62" fill="#141726" fillOpacity=".52" />
    <path d="M713 486.500h72" stroke="#85868f" />
    <g shapeRendering="crispEdges">{CANDLES.map((d) => <Candle key={d[0]} d={d} />)}</g>
    <path d="M37 423.500h999" stroke="#101119" />
    <path d="M37 423.500h999" stroke="#fff" strokeDasharray="1 1" shapeRendering="crispEdges" />
    <path d="M547 186l14 0 145 59-153-53z" fill="#259a95" />
    <rect x="518" y="168" width="44" height="24" rx="3" fill="#259a95" />
    <path d="M801 485l122-29 6 4z" fill="#259a8f" />
    <rect x="918" y="436" width="40" height="24" rx="3" fill="#25918f" />
    <g fill="#fff" fontSize="10" fontWeight="600" textAnchor="middle">
      <text x="539" y="183">target</text>
      <text x="937" y="451">entry</text>
    </g>
    <g stroke="#c3c4cc" strokeDasharray="4 3" strokeOpacity=".7" shapeRendering="crispEdges">
      <path d="M37 364.500h999" />
      <path d="M817.500 86v529" />
    </g>
    <path d="M816 356.500v15M808.500 364h15" stroke="#f4f4f8" strokeWidth="2" />
    <circle cx="735" cy="607" r="7" fill="#2a1638" stroke="#8f3ba0" />
    <path d="M736.500 602l-4 5.500h5l-4 5" fill="none" stroke="#c050d0" />
    <circle cx="739.500" cy="602.500" r="2" fill="#e0274f" />
    <g fill="#dfe0e6">
      <path d="M45 596h8v10h-4v-6h-4zM58.500 596h6l-4 10h-5z" />
      <circle cx="56" cy="598" r="2" />
      <text x="69" y="606" fontSize="13" fontWeight="700" fontFamily="Lato, sans-serif">TradingView</text>
    </g>
  </Canvas>
);

const Chart = () => (
  <ChartBox>
    <Plot>
      <Drawing />
      <Legend>
        <LegendLine>
          <Coin size={12} />
          <SymbolName>Gold (XAUUSD) · 5 · Capital.com</SymbolName>
          <Status $color="#e8465c" />
          <Status $color="#3e9a80" $gap={9} />
          <Status $color="#8d3a72" />
          <Ohlc>
            <b>O</b>{t("4081,34")} <b>H</b>{t("4085,74")} <b>B</b>{t("4081,14")} <b>C</b>{t("4083,12")} +1,89 (+0,05%) <i>+17,89 (+0,44%)</i>
          </Ohlc>
        </LegendLine>
        <Quotes>
          <Quote $color="#c02438">{t("4082,72")}<small>SELL</small></Quote>
          <Spread>0,30</Spread>
          <Quote $color="#2434b4">{t("4083,02")}<small>BUY</small></Quote>
        </Quotes>
        <Collapse aria-label="Indicateurs masqués"><ChevronDown size={7} />2</Collapse>
      </Legend>
      <AddAlert aria-label="Ajouter"><CirclePlus size={12} strokeWidth={2} /></AddAlert>
      <LineTag>GOLD</LineTag>
    </Plot>
    <PriceAxis>
      <Currency>
        <select aria-label="Devise" defaultValue="USD"><option>USD</option></select>
        <ChevronDown size={7} />
      </Currency>
      <ul>
        {PRICES.map(([p, y, kind]) => (
          <PriceTag key={p} $y={y - 92} $kind={kind}>{t(p)}{kind === "last" && <small>03:11</small>}</PriceTag>
        ))}
      </ul>
    </PriceAxis>
    <TimeAxis>
      <Hours>{HOURS.map((h, i) => <li key={i}>{h}</li>)}</Hours>
      <TimeTag><span>lun. 24 Nov '25</span><span>17:40</span></TimeTag>
    </TimeAxis>
    <AxisSettings aria-label="Paramètres"><Glyph name="hex" size={12} weight={2} /></AxisSettings>
  </ChartBox>
);

const WatchPanel = () => (
  <Watch>
    <PanelHead>
      <HeadTitle>A surveiller <ChevronDown size={8} /></HeadTitle>
      <PlainButton $w={25} aria-label="Ajouter un symbole"><Plus size={14} strokeWidth={1.5} /></PlainButton>
      <PlainButton $w={25} aria-label="Vue tableau"><Glyph name="table" /></PlainButton>
      <PlainButton $w={25} aria-label="Plus"><Glyph name="more" size={13} weight={2} /></PlainButton>
    </PanelHead>
    <WatchTable>
      <colgroup><col width="47" /><col width="37" /><col width="34" /><col /></colgroup>
      <thead>
        <tr>
          <th><SymbolCell><Flag $color="#555" /><HeadLabel>Symbole</HeadLabel></SymbolCell></th>
          <th><HeadClip>Dernier</HeadClip></th>
          <th>Chg</th>
          <th>Chg%</th>
        </tr>
      </thead>
      <tbody>
        <tr aria-hidden="true"><Gap colSpan="4" /></tr>
        <WatchRow>
          <td><SymbolCell><Flag $color="#f23f5d" /><IndexLogo>100</IndexLogo>US100</SymbolCell></td>
          <td><Last>24{"\u200A"}63<span>2,2</span></Last></td>
          <td>357,9</td>
          <td>1,47%</td>
        </WatchRow>
        <WatchRow $on>
          <td><SymbolCell><Flag $color="#f23f5d" /><Coin size={12} />GOLD</SymbolCell></td>
          <td><Last $up>{t("4082")},<span>90</span></Last></td>
          <td>17,88</td>
          <td>0,44%</td>
        </WatchRow>
      </tbody>
    </WatchTable>
  </Watch>
);

const DetailPanel = () => (
  <Details>
    <PanelHead $pad={10} $h={32}>
      <HeadTitle as="div"><Coin size={17} />GOLD</HeadTitle>
      <PlainButton $w={25} aria-label="Disposition"><Glyph name="tiles" /></PlainButton>
      <PlainButton $w={25} aria-label="Note"><Glyph name="edit" /></PlainButton>
      <PlainButton $w={25} aria-label="Plus"><Glyph name="more" size={13} weight={2} /></PlainButton>
    </PanelHead>
    <DetailBody>
      <Line $bold>Gold (XAUUSD) <Glyph name="out" size={10} /> · CAPITALCOM</Line>
      <Line $color="#9a9a9a">Produit de base • Cfd</Line>
      <BigPrice>{t("4082")},<span>90</span><small>USD</small></BigPrice>
      <Change>+17,88&nbsp; +0,44%</Change>
      <Line $color="#3fae86"><Bullet />Marché ouvert</Line>
      <News>
        <Zap size={7} color="#b07be0" fill="#b07be0" />
        <span>il y a 8 heures • Du budget<br />britannique au "Black Friday...</span>
        <ChevronRight size={9} />
      </News>
      <Caption>Saisonniers</Caption>
      <Season viewBox="330 590 445 275" fill="none" role="img" aria-label="Saisonniers">
        <path d="M400 590v275M506 590v275M611 590v275M716 590v275" stroke="#5a5a5a" strokeWidth="3" strokeDasharray="14 10" />
        <path d="M333 849h439" stroke="#777" strokeWidth="5" />
        <defs>
          <linearGradient id="warm"><stop offset="0" stopColor="#d9672a" /><stop offset="1" stopColor="#c59a1c" /></linearGradient>
        </defs>
        <polyline points={zigzag(ORANGE, 1.5)} stroke="url(#warm)" strokeWidth="3" />
        <polyline points={zigzag(GREEN, 2)} stroke="#29a04a" strokeWidth="4" />
        <polyline points={zigzag(BLUE, 2)} stroke="#3f78e8" strokeWidth="7" strokeLinejoin="round" />
        <circle cx="706" cy="646" r="9" fill="#3f78e8" />
      </Season>
      <Months><span>janv.</span><span>juin</span><span>nov.</span></Months>
    </DetailBody>
  </Details>
);

const LOGOS = {
  windows: <path d="M0 0h8.500v8.500H0zM9.500 0H18v8.500H9.500zM0 9.500h8.500V18H0zM9.500 9.500H18V18H9.500z" fill="#189bdc" />,
  copilot: <><path d="M4 2h6l-3 11H3Q0 13 1 9l1-4q0-3 2-3z" fill="#2f8fe8" /><path d="M3 13h5l3-9h-4z" fill="#58c46a" /><path d="M10 2h2q2 0 3 3h-5z" fill="#6a50d8" /><path d="M10 5h5q3 0 2 4l-1 4q-1 3-3 3H8z" fill="#e85f9a" /><path d="M5 13h6l-1 3H8q-2 0-3-3z" fill="#f2a03a" /></>,
  files: <><path d="M1 2h6l2 2h8v12H1z" fill="#e8a820" /><path d="M1 6h16v10H1z" fill="#fcd050" /><path d="M4 11h10v5H4z" fill="#2f7fc4" /></>,
  edge: <><circle cx="9" cy="9" r="8.500" fill="#1677cf" /><path d="M1 8C2-1 17-2 17.500 9c0 4-6 4-7 2 2-5-6-8-9.500-3z" fill="#45cfa0" /><path d="M7 9c-1 5 5 8 9 5-4 6-12 3-12-2 0-4 3-6 6-4-2 0-3 0-3 1z" fill="#bfe6f5" /></>,
  store: <><rect x="1" y="4" width="16" height="13" rx="2" fill="#1c4d78" /><path d="M6 4V1.500h6V4" fill="none" stroke="#2a9ae0" strokeWidth="1.500" /><path d="M5.500 7h3v3h-3z" fill="#f05030" /><path d="M9.500 7h3v3h-3z" fill="#7cc040" /><path d="M5.500 11h3v3h-3z" fill="#20a0f0" /><path d="M9.500 11h3v3h-3z" fill="#ffc020" /></>,
  mail: <><path d="M1 7l8-5 8-1v12l-5 4H3q-2 0-2-2z" fill="#1d6fc8" /><path d="M3 10l14-8v6L9 14z" fill="#5cb8f4" /><rect x="0" y="9" width="8" height="8" rx="1" fill="#0f4a90" /><circle cx="4" cy="13" r="2" fill="none" stroke="#fff" strokeWidth="1.200" /></>,
  chrome: <><circle cx="9" cy="9" r="8.500" fill="#fbc116" /><path d="M9 9L1.600 4.800A8.500 8.500 0 0116.400 4.800H9z" fill="#dc3a2e" /><path d="M9 9l-7.400-4.200A8.500 8.500 0 009 17.500l3.700-6.500z" fill="#1f9a52" /><circle cx="9" cy="9" r="4.200" fill="#fff" /><circle cx="9" cy="9" r="3.200" fill="#3f7de8" /></>,
  obs: <><circle cx="8.500" cy="10" r="7.500" fill="#1b1b1b" /><path d="M8 4c-2 3 0 5 2 5M13 11c-3-1-5 1-4 3M4 12c3 1 4-1 4-3" stroke="#999" fill="none" /><circle cx="14" cy="4" r="4" fill="#e8101c" /></>,
};
const Logo = ({ name, size = 17 }) => <svg width={size} height={size} viewBox="0 0 18 18" aria-hidden="true">{LOGOS[name]}</svg>;

const Desktop = () => (
  <Taskbar>
    <span />
    <Dock>
      {["windows", "copilot", "files", "edge", "store", "mail"].map((n) => <Launcher key={n} aria-label={n}><Logo name={n} /></Launcher>)}
      <Launcher $run aria-label="Discord"><Disc><FaDiscord size={11} color="#fff" /></Disc><Badge $top={1} $right={-1}>9+</Badge></Launcher>
      <Launcher $run $on aria-label="Chrome"><Logo name="chrome" /></Launcher>
      <Launcher $run aria-label="OBS"><Logo name="obs" /></Launcher>
      <Launcher $run aria-label="Spotify"><SpotifyDisc size={16} /></Launcher>
    </Dock>
    <Tray>
      <ChevronUp size={9} />
      <svg width="12" height="12" viewBox="0 0 12 12" aria-hidden="true"><path d="M2 5a4.500 4.500 0 018-2M10 1v3H7M1 8v3h3" fill="none" stroke="#222" /><rect x="6" y="6" width="5" height="5" rx="1" fill="#e89a20" /></svg>
      <Mic size={12} color="#34608c" />
      <ToolSet>
        <svg width="14" height="12" viewBox="0 0 14 12" aria-hidden="true"><path d="M8 2H1v7h9V7M3 11h5M10 1h3v4h-3z" fill="none" stroke="#555" /></svg>
        <Volume2 size={11} strokeWidth={1.5} />
      </ToolSet>
      <Clock>07:01<br />24/11/2025</Clock>
      <svg width="10" height="12" viewBox="0 0 10 12" aria-hidden="true"><path d="M1 9V5q1-3 4-3h4v5H8v2zM3 10h3v1H3z" fill="#1c1c1c" /><path d="M5 3h3L5 6h3" stroke="#ddd" fill="none" /></svg>
    </Tray>
  </Taskbar>
);

const KickMark = () => (
  <svg width="9" height="9" viewBox="0 0 9 9" aria-hidden="true"><path d="M0 0h4v2h1V1h1V0h3v3H8v1H7v1h1v1h1v3H6V8H5V7H4v2H0z" fill="#53fc18" /></svg>
);
const Tube = () => (
  <svg width="12" height="9" viewBox="0 0 12 9" aria-hidden="true"><rect width="12" height="9" rx="3" fill="#e8102c" /><path d="M5 2.500v4l3-2z" fill="#fff" /></svg>
);
const TvMark = () => (
  <svg width="10" height="8" viewBox="0 0 10 8" aria-hidden="true"><path d="M0 1h4v6H2V3H0zM7.500 1H10L7.500 7H5z" fill="#fff" /><circle cx="5.500" cy="2" r="1" fill="#fff" /></svg>
);
const Fox = () => (
  <svg width="12" height="10" viewBox="0 0 12 10" aria-hidden="true"><path d="M0 0l4 3h4l4-3-1 6-2 4H3L1 6z" fill="#e4662a" /><path d="M3 6h2l1 2 1-2h2L8 9H4z" fill="#5b2512" /></svg>
);
const Face = () => (
  <svg width="14" height="14" viewBox="0 0 14 14" aria-hidden="true"><circle cx="7" cy="7" r="7" fill="#f1f1f1" /><path d="M4 3q4-3 6 1 2 4-1 7l-1-4-2 1q-2-2-2-5zM2 10l3-1 1 4z" fill="#111" /></svg>
);

const Browser = () => (
  <>
    <TabStrip>
      <RoundButton aria-label="Rechercher dans les onglets"><ChevronDown size={10} strokeWidth={2.5} /></RoundButton>
      <Tab $w={154} $active><TvMark /><TabTitle $fade>GOLD 4082,90 ▲ +0.44% Anonyme</TabTitle><X size={9} strokeWidth={2.5} /></Tab>
      <Tab $w={161}><Tube /><TabTitle>YouTube</TabTitle><X size={9} strokeWidth={2.5} /></Tab>
      <Tab $w={159}><KickMark /><TabTitle>Stream - Kick Dashboard</TabTitle><X size={9} strokeWidth={2.5} /></Tab>
      <PlainButton $w={22} $h={19} aria-label="Nouvel onglet"><Plus size={11} strokeWidth={2.5} /></PlainButton>
      <WindowButtons>
        <PlainButton aria-label="Réduire"><Minus size={9} /></PlainButton>
        <PlainButton aria-label="Restaurer"><Copy size={8} /></PlainButton>
        <PlainButton aria-label="Fermer"><X size={11} /></PlainButton>
      </WindowButtons>
    </TabStrip>
    <AddressRow>
      <PlainButton $w={24} aria-label="Précédent"><ArrowLeft size={11} strokeWidth={2.5} /></PlainButton>
      <PlainButton $w={24} $color="#888" aria-label="Suivant"><ArrowRight size={11} /></PlainButton>
      <PlainButton $w={24} aria-label="Actualiser"><RotateCw size={11} strokeWidth={2.5} /></PlainButton>
      <AddressField>
        <SiteInfo aria-label="Informations du site"><Glyph name="tune" size={11} weight={3} /></SiteInfo>
        <Url><b>fr.tradingview.com</b>/chart/rflHvM63/?symbol=CAPITALCOM%3AGOLD</Url>
        <PlainButton aria-label="Favori"><Star size={11} /></PlainButton>
      </AddressField>
      <PlainButton $w={24} aria-label="Extension"><Fox /></PlainButton>
      <PlainButton $w={24} aria-label="Extensions"><Puzzle size={12} /></PlainButton>
      <Divider $m={5} />
      <PlainButton $w={24} aria-label="Médias"><ListMusic size={12} /></PlainButton>
      <PlainButton $w={24} aria-label="Profil"><Face /></PlainButton>
      <PlainButton $w={24} aria-label="Menu"><EllipsisVertical size={12} strokeWidth={2.5} /></PlainButton>
    </AddressRow>
    <Stats>
      <Stat><dt>IPS</dt><dd>N/A</dd></Stat>
      <Stat $wide><dt>Processeur<br />graphique</dt><dd>8 %</dd></Stat>
      <Stat><dt>Processeur</dt><dd>17 %</dd></Stat>
      <Stat><dt>LAT</dt><dd>N/A</dd></Stat>
    </Stats>
  </>
);

export default function App() {
  return (
    <Page>
      <Global />
      <Browser />
      <AppHeader>
        <Profile aria-label="Profil">I<Badge>11</Badge></Profile>
        <Tool $w={62} $pad={4} $gap={3} $bold><Search size={12} />GOLD</Tool>
        <Tool $w={29} aria-label="Comparer"><CirclePlus size={14} strokeWidth={1.5} /></Tool>
        <Divider />
        <Tool $w={29}>5m</Tool>
        <Divider />
        <Tool $w={29} aria-label="Chandeliers"><Glyph name="candles" size={16} /></Tool>
        <Divider />
        <Tool $w={76} $pad={6}><Glyph name="indicators" size={16} />Indicateurs</Tool>
        <Tool $w={20} aria-label="Favoris"><ChevronDown size={9} /></Tool>
        <Tool $w={24} aria-label="Modèles"><Glyph name="tiles" size={16} /></Tool>
        <Divider />
        <Tool $w={62} $pad={7}><Glyph name="alert" size={17} />Alerte</Tool>
        <Tool $w={60} $pad={5} $gap={5}><Rewind size={13} strokeWidth={1.5} />Replay</Tool>
        <Divider />
        <Tool $w={24} aria-label="Annuler"><Glyph name="undo" size={12} weight={2} /></Tool>
        <FloatingTools>
          <Grip />
          {FLOATING.map((n) => <button key={n} aria-label={n}><Glyph name={n} size={17} /></button>)}
        </FloatingTools>
        <RightTools>
          <Tool $w={22} aria-label="Disposition"><Glyph name="square" size={17} /></Tool>
          <Tool $w={44} $pad={4}>Anonyme</Tool>
          <Tool $w={22} aria-label="Gérer"><ChevronDown size={9} /></Tool>
          <Divider />
          <Tool $w={25} aria-label="Recherche rapide"><Glyph name="bolt" size={17} /></Tool>
          <Tool $w={25} aria-label="Paramètres"><Glyph name="hex" size={17} /></Tool>
          <Tool $w={25} aria-label="Plein écran"><Glyph name="full" size={15} /></Tool>
          <Tool $w={25} aria-label="Capture"><Camera size={16} strokeWidth={1.2} /></Tool>
          <Publish>Publier</Publish>
        </RightTools>
      </AppHeader>
      <Workspace>
        <LeftRail>
          {LEFT.map((group, i) => (
            <RailGroup key={i}>
              {group.map((n) => <RailButton key={n} $on={n === "cross"} aria-label={n}><Glyph name={n} /></RailButton>)}
            </RailGroup>
          ))}
          <Favourite aria-label="Favoris"><Glyph name="star" size={16} /></Favourite>
        </LeftRail>
        <Center>
          <Chart />
          <RangeBar>
            {["1D", "5D", "1M", "3M", "6M", "YTD", "1Y", "5Y", "Tout"].map((r) => <Range key={r}>{r}</Range>)}
            <Divider />
            <button aria-label="Aller à"><Glyph name="goto" size={15} /></button>
            <Push>16:01:49 UTC+1</Push>
          </RangeBar>
          <PanelBar>
            <button>Editeur Pine</button>
            <button>Espace de Trading</button>
            <Push>
              <button aria-label="Ouvrir"><ChevronUp size={14} strokeWidth={1.3} /></button>
              <button aria-label="Agrandir"><Glyph name="window" size={14} weight={2} /></button>
            </Push>
          </PanelBar>
        </Center>
        <Side>
          <WatchPanel />
          <DetailPanel />
        </Side>
        <RightRail>
          <RailButton $h={25} $on aria-label="Liste"><Glyph name="list" size={20} /></RailButton>
          <RailButton $h={25} aria-label="Alertes"><Glyph name="alarm" size={19} /><Badge $top={-1} $right={-1}>11</Badge></RailButton>
          <RailButton $h={25} aria-label="Objets"><Layers2 size={17} strokeWidth={1.2} /></RailButton>
          <RailButton $h={25} aria-label="Discussions"><Glyph name="chat" size={19} /></RailButton>
          <Spacer />
          <RailButton $h={25} aria-label="Filtres"><Glyph name="target" size={20} /></RailButton>
          <RailButton $h={25} aria-label="Calendrier"><Glyph name="calendar" size={19} /></RailButton>
          <RailButton $h={25} aria-label="Fil"><Glyph name="feed" size={19} /><Badge $top={-1} $right={-2}>99+</Badge></RailButton>
          <RailButton $h={25} aria-label="Notifications"><Glyph name="bell" size={19} /></RailButton>
          <Apps aria-label="Applications">
            <svg width="12" height="12" viewBox="0 0 12 12" aria-hidden="true"><path d="M0 0h3v3H0zM4.500 0h3v3h-3zM9 0h3v3H9zM0 4.500h3v3H0zM4.500 4.500h3v3h-3zM9 4.500h3v3H9zM0 9h3v3H0zM4.500 9h3v3h-3zM9 9h3v3H9z" fill="#111" /></svg>
          </Apps>
          <span />
          <RailButton $h={25} aria-label="Aide"><Glyph name="help" size={20} /></RailButton>
        </RightRail>
      </Workspace>
      <Desktop />
    </Page>
  );
}
